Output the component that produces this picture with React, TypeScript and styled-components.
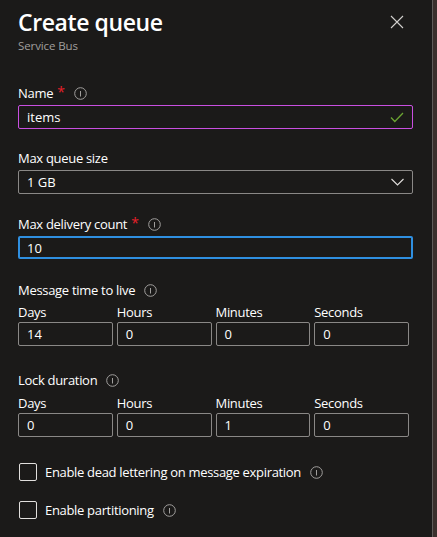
import styled, { createGlobalStyle } from "styled-components";

const GlobalStyle = createGlobalStyle`
	html, body {
		margin: 0;
		padding: 0;
		background: #3a302d;
	}
	* {
		box-sizing: border-box;
	}
`;

const Panel = styled.div`
	width: 433px;
	height: 537px;
	background: #1b1a19;
	border-right: 1px solid #5f5c5a;
	padding: 6px 0 0 18px;
	font-family: "Open Sans", "Noto Sans", sans-serif;
	color: #ffffff;
	position: relative;
	overflow: hidden;
`;

const Header = styled.div`
	display: flex;
	flex-direction: column;
	margin-bottom: 29px;
`;

const Title = styled.h1`
	margin: 0;
	font-size: 23px;
	font-weight: 600;
	line-height: 32px;
	letter-spacing: -0.4px;
`;

const Subtitle = styled.div`
	font-size: 11.5px;
	line-height: 16px;
	color: #a19f9d;
	letter-spacing: -0.1px;
`;

const CloseButton = styled.button`
	position: absolute;
	top: 15px;
	left: 390px;
	width: 14px;
	height: 14px;
	padding: 0;
	border: 0;
	background: none;
	display: flex;
	color: #d2d0ce;
`;

const Field = styled.div<{ $gap?: number }>`
	display: flex;
	flex-direction: column;
	width: 395px;
	margin-bottom: ${(p) => p.$gap ?? 20}px;
`;

const Label = styled.div`
	display: flex;
	align-items: center;
	height: 20px;
	font-size: 13px;
	margin-bottom: 2px;
	letter-spacing: -0.3px;
`;

const Required = styled.span`
	color: #e8202a;
	margin-left: 4px;
	font-size: 14px;
	position: relative;
	top: -2px;
`;

const InfoWrap = styled.span<{ $ml?: number }>`
	display: inline-flex;
	margin-left: ${(p) => p.$ml ?? 10}px;
	color: #a19f9d;
`;

const TextBox = styled.div<{ $border?: string; $thick?: boolean }>`
	display: flex;
	align-items: center;
	justify-content: space-between;
	height: ${(p) => (p.$thick ? 23 : 24)}px;
	border: ${(p) => (p.$thick ? 2 : 1)}px solid ${(p) => p.$border ?? "#8a8886"};
	border-radius: 2px;
	padding: 0 ${(p) => (p.$thick ? 7 : 8)}px;
	font-size: 13px;
	color: #ffffff;
`;

const Grid = styled.div<{ $top?: number }>`
	display: grid;
	grid-template-columns: repeat(4, 1fr);
	column-gap: 4px;
	width: 391px;
	margin-top: ${(p) => p.$top ?? 0}px;
`;

const SubLabel = styled.div`
	font-size: 13px;
	line-height: 20px;
	letter-spacing: -0.3px;
`;

const CheckRow = styled.label<{ $mb?: number }>`
	display: flex;
	align-items: center;
	height: 20px;
	margin-left: 1px;
	margin-bottom: ${(p) => p.$mb ?? 0}px;
	font-size: 13px;
	letter-spacing: -0.32px;
`;

const Box = styled.span`
	width: 18px;
	height: 18px;
	border: 1px solid #e1dfdd;
	border-radius: 2px;
	margin-right: 8px;
`;

function Info({ ml }: { ml?: number }) {
	return (
		<InfoWrap $ml={ml}>
			<svg width="13" height="13" viewBox="0 0 13 13" fill="none">
				<circle cx="6.5" cy="6.5" r="5.8" stroke="currentColor" strokeWidth="1" />
				<line x1="6.5" y1="4" x2="6.5" y2="9.5" stroke="currentColor" strokeWidth="1" />
			</svg>
		</InfoWrap>
	);
}

function TimeGroup({ values, top }: { values: string[]; top?: number }) {
	const names = ["Days", "Hours", "Minutes", "Seconds"];
	return (
		<Grid $top={top}>
			{names.map((n) => (
				<SubLabel key={n}>{n}</SubLabel>
			))}
			{values.map((v, i) => (
				<TextBox key={i}>{v}</TextBox>
			))}
		</Grid>
	);
}

export default function App() {
	return (
		<>
			<GlobalStyle />
			<Panel>
				<Header>
					<Title>Create queue</Title>
					<Subtitle>Service Bus</Subtitle>
				</Header>
				<CloseButton aria-label="Close">
					<svg width="14" height="14" viewBox="0 0 14 14">
						<path d="M1 1L13 13M13 1L1 13" stroke="currentColor" strokeWidth="1.1" />
					</svg>
				</CloseButton>

				<Field $gap={19}>
					<Label>
						Name<Required>*</Required>
						<Info ml={9} />
					</Label>
					<TextBox $border="#c94fe0">
						items
						<svg width="14" height="11" viewBox="0 0 14 11">
							<path d="M1 5.5L4.8 9.5L13 1" stroke="#6ca533" strokeWidth="1.3" fill="none" />
						</svg>
					</TextBox>
				</Field>

				<Field>
					<Label>Max queue size</Label>
					<TextBox>
						1 GB
						<svg width="13" height="8" viewBox="0 0 13 8">
							<path d="M0.5 1L6.5 7L12.5 1" stroke="#e1dfdd" strokeWidth="1.1" fill="none" />
						</svg>
					</TextBox>
				</Field>

				<Field $gap={21}>
					<Label>
						Max delivery count<Required>*</Required>
						<Info ml={9} />
					</Label>
					<TextBox $border="#2f8fe0" $thick>
						10
					</TextBox>
				</Field>

				<Field $gap={24}>
					<Label>
						Message time to live
						<Info ml={9} />
					</Label>
					<TimeGroup values={["14", "0", "0", "0"]} />
				</Field>

				<Field $gap={25}>
					<Label>
						Lock duration
						<Info ml={9} />
					</Label>
					<TimeGroup values={["0", "0", "1", "0"]} top={1} />
				</Field>

				<CheckRow $mb={18}>
					<Box />
					Enable dead lettering on message expiration
					<Info ml={9} />
				</CheckRow>
				<CheckRow>
					<Box />
					Enable partitioning
					<Info ml={9} />
				</CheckRow>
			</Panel>
		</>
	);
}
